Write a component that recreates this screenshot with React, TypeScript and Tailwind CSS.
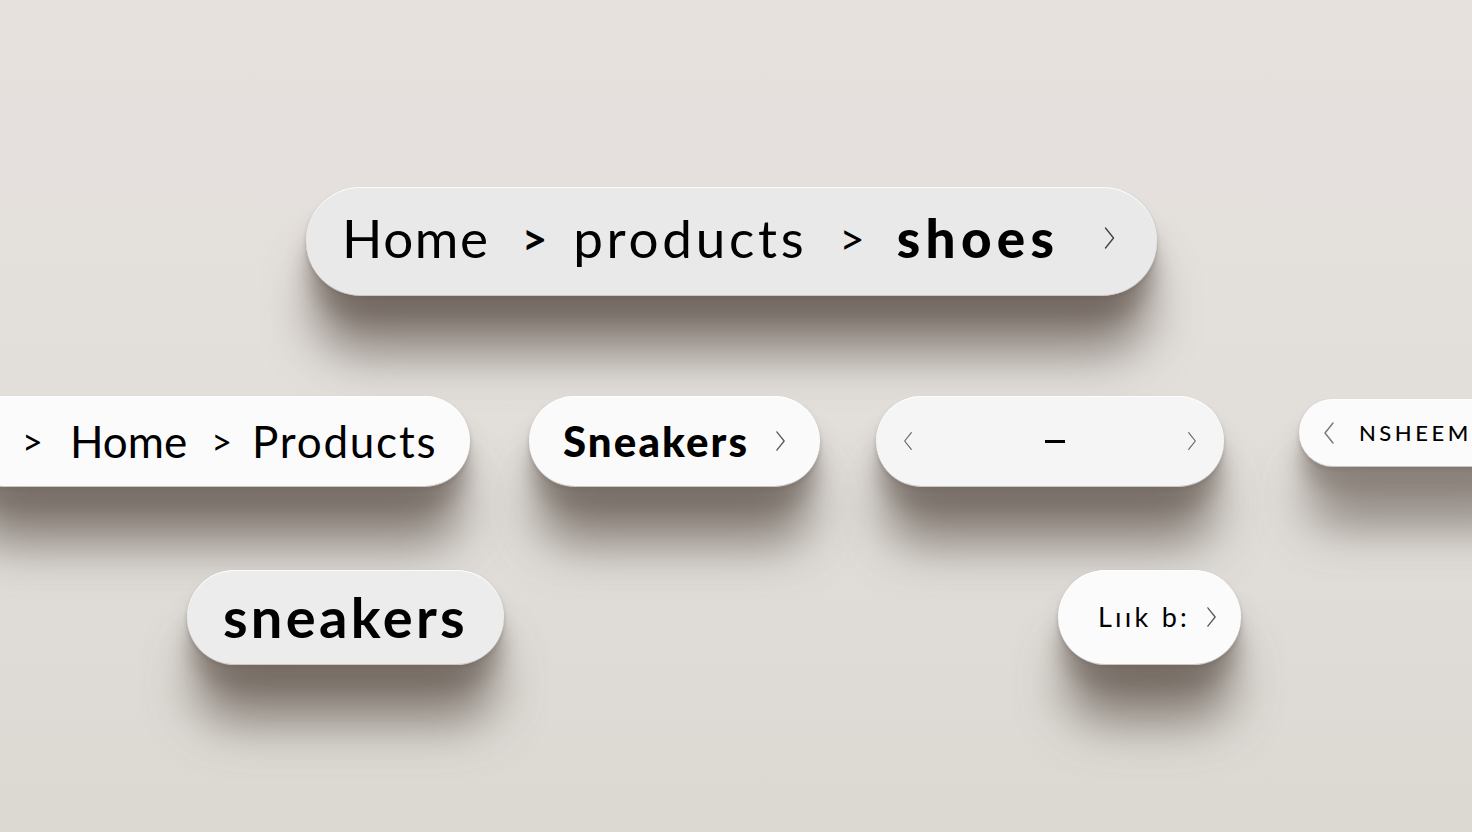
import React from 'react';

const Chevron: React.FC<{ dir?: 'left' | 'right'; className?: string }> = ({ dir = 'right', className = '' }) => (
    <svg viewBox="0 0 12 24" fill="none" className={className} stroke="currentColor" strokeWidth="1.4" strokeLinecap="round" strokeLinejoin="round">
        {dir === 'right' ? <polyline points="2,2 10,12 2,22" /> : <polyline points="10,2 2,12 10,22" />}
    </svg>
);

const pill =
    'flex items-center rounded-full border-b border-[#cbc6c2] shadow-[0_64px_50px_-8px_rgba(96,84,76,0.72),0_24px_20px_-2px_rgba(104,92,84,0.5),0_3px_4px_rgba(60,50,45,0.22),inset_0_1px_0_rgba(255,255,255,0.9)]';

export default function App() {
    return (
        <div className="w-full h-[832px] overflow-hidden bg-linear-to-b from-[#e7e1de] via-[#e2dfdb] to-[#dcd9d3] font-['Lato',sans-serif] text-black">
            {/* Main breadcrumb */}
            <div className="pt-[187px] pl-[306px]">
                <div className={`${pill} w-[851px] h-[109px] bg-[#e9e9e9] pl-[36px] pb-[6px] text-[53px]`}>
                    <span className="tracking-[0.03em]">Home</span>
                    <span className="ml-[32px] font-bold text-[44px]">&gt;</span>
                    <span className="ml-[26px] tracking-[0.07em]">products</span>
                    <span className="ml-[32px] text-[44px]">&gt;</span>
                    <span className="ml-[32px] font-black tracking-[0.1em]">shoes</span>
                    <Chevron className="ml-[44px] w-[13px] h-[24px] text-[#444]" />
                </div>
            </div>

            {/* Second row */}
            <div className="flex items-start mt-[100px]">
                <div className={`${pill} shrink-0 -ml-[40px] w-[510px] h-[91px] bg-[#fbfbfb] pl-[62px] text-[44px]`}>
                    <span className="text-[36px]">&gt;</span>
                    <span className="ml-[27px]">Home</span>
                    <span className="ml-[24px] text-[36px]">&gt;</span>
                    <span className="ml-[20px] tracking-[0.04em]">Products</span>
                </div>
                <div className={`${pill} shrink-0 ml-[59px] w-[291px] h-[91px] bg-[#fafafa] pl-[34px] text-[42px] font-black tracking-[0.05em]`}>
                    <span>Sneakers</span>
                    <Chevron className="ml-[26px] w-[11px] h-[22px] text-[#555]" />
                </div>
                <div className={`${pill} shrink-0 ml-[56px] w-[348px] h-[91px] bg-[#f5f5f5] px-[27px] justify-between`}>
                    <Chevron dir="left" className="w-[10px] h-[22px] text-[#666]" />
                    <span className="w-[20px] h-[3px] bg-black ml-[10px]" />
                    <Chevron className="w-[10px] h-[22px] text-[#666]" />
                </div>
                <div className={`${pill} shrink-0 ml-[75px] mt-[3px] w-[240px] h-[68px] bg-[#fbfbfb] pl-[24px] text-[22px] tracking-[0.16em] font-medium`}>
                    <Chevron dir="left" className="w-[12px] h-[24px] text-[#777]" />
                    <span className="ml-[24px]">NSHEEM</span>
                </div>
            </div>

            {/* Third row */}
            <div className="flex items-start mt-[83px]">
                <div className={`${pill} shrink-0 ml-[187px] w-[317px] h-[95px] bg-[#ececec] justify-center text-[56px] font-bold tracking-[0.06em]`}>
                    <span>sneakers</span>
                </div>
                <div className={`${pill} shrink-0 ml-[554px] w-[183px] h-[95px] bg-[#fbfbfb] pl-[40px] text-[27px] tracking-[0.12em]`}>
                    <span>Lıık b:</span>
                    <Chevron className="ml-[16px] w-[11px] h-[22px] text-[#555]" />
                </div>
            </div>
        </div>
    );
}
